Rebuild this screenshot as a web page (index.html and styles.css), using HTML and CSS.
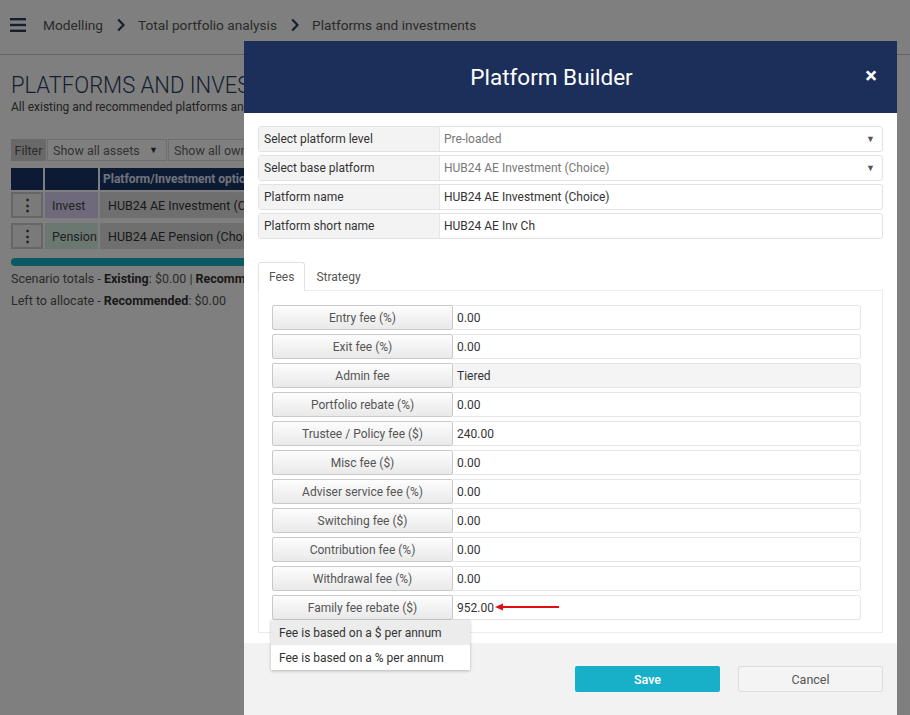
FILE: index.html
```html
<!DOCTYPE html>
<html>
<head>
<meta charset="utf-8">
<link rel="stylesheet" href="styles.css">
</head>
<body>
<div class="page">
  <div class="topbar">
    <svg class="burger" width="16" height="14" viewBox="0 0 16 14"><rect x="0" y="0" width="16" height="2.4" fill="#2c3e5c"/><rect x="0" y="5.8" width="16" height="2.4" fill="#2c3e5c"/><rect x="0" y="11.6" width="16" height="2.4" fill="#2c3e5c"/></svg>
    <span class="crumb">Modelling</span>
    <svg class="chev" width="8" height="14" viewBox="0 0 8 14"><path d="M1.2 1.5 L6.5 7 L1.2 12.5" fill="none" stroke="#2c3e5c" stroke-width="2.2"/></svg>
    <span class="crumb">Total portfolio analysis</span>
    <svg class="chev" width="8" height="14" viewBox="0 0 8 14"><path d="M1.2 1.5 L6.5 7 L1.2 12.5" fill="none" stroke="#2c3e5c" stroke-width="2.2"/></svg>
    <span class="crumb">Platforms and investments</span>
  </div>
  <div class="content">
    <h1 class="title">PLATFORMS AND INVESTMENTS</h1>
    <p class="subtitle">All existing and recommended platforms and investments</p>
    <div class="filters">
      <span class="filter-label">Filter</span>
      <span class="filter-select">Show all assets <span class="caret">▼</span></span>
      <span class="filter-select wide">Show all owners <span class="caret">▼</span></span>
    </div>
    <div class="grid">
      <div class="gh"></div><div class="gh"></div><div class="gh gh-text">Platform/Investment option</div>
      <div class="gc btn-cell"><span class="dots">⋮</span></div><div class="gc invest">Invest</div><div class="gc name">HUB24 AE Investment (Choice)</div>
      <div class="gc btn-cell"><span class="dots">⋮</span></div><div class="gc pension">Pension</div><div class="gc name">HUB24 AE Pension (Choice)</div>
    </div>
    <div class="progress"></div>
    <p class="totals">Scenario totals - <b>Existing</b>: $0.00 | <b>Recommended</b>: $0.00</p>
    <p class="totals">Left to allocate - <b>Recommended</b>: $0.00</p>
  </div>
</div>
<div class="overlay"></div>
<div class="modal">
  <div class="modal-head">
    <span class="modal-title">Platform Builder</span>
    <span class="close">×</span>
  </div>
  <div class="modal-body">
    <div class="frow"><span class="flabel">Select platform level</span><span class="fvalue sel">Pre-loaded<span class="caret2">▼</span></span></div>
    <div class="frow"><span class="flabel">Select base platform</span><span class="fvalue sel">HUB24 AE Investment (Choice)<span class="caret2">▼</span></span></div>
    <div class="frow"><span class="flabel">Platform name</span><span class="fvalue">HUB24 AE Investment (Choice)</span></div>
    <div class="frow"><span class="flabel">Platform short name</span><span class="fvalue">HUB24 AE Inv Ch</span></div>
    <div class="tabs">
      <span class="tab active">Fees</span>
      <span class="tab">Strategy</span>
    </div>
    <div class="panel">
      <div class="fee"><span class="fee-label">Entry fee (%)</span><span class="fee-value">0.00</span></div>
      <div class="fee"><span class="fee-label">Exit fee (%)</span><span class="fee-value">0.00</span></div>
      <div class="fee"><span class="fee-label">Admin fee</span><span class="fee-value ro">Tiered</span></div>
      <div class="fee"><span class="fee-label">Portfolio rebate (%)</span><span class="fee-value">0.00</span></div>
      <div class="fee"><span class="fee-label">Trustee / Policy fee ($)</span><span class="fee-value">240.00</span></div>
      <div class="fee"><span class="fee-label">Misc fee ($)</span><span class="fee-value">0.00</span></div>
      <div class="fee"><span class="fee-label">Adviser service fee (%)</span><span class="fee-value">0.00</span></div>
      <div class="fee"><span class="fee-label">Switching fee ($)</span><span class="fee-value">0.00</span></div>
      <div class="fee"><span class="fee-label">Contribution fee (%)</span><span class="fee-value">0.00</span></div>
      <div class="fee"><span class="fee-label">Withdrawal fee (%)</span><span class="fee-value">0.00</span></div>
      <div class="fee last"><span class="fee-label">Family fee rebate ($)</span><span class="fee-value">952.00</span>
        <svg class="arrow" width="66" height="8" viewBox="0 0 66 8"><path d="M6 4 H64" stroke="#e01010" stroke-width="2"/><path d="M0 4 L8 0.5 L8 7.5 Z" fill="#e01010"/></svg>
        <div class="dropdown">
          <div class="dd-item hl">Fee is based on a $ per annum</div>
          <div class="dd-item">Fee is based on a % per annum</div>
        </div>
      </div>
    </div>
  </div>
  <div class="modal-foot">
    <span class="btn save">Save</span>
    <span class="btn cancel">Cancel</span>
  </div>
</div>
</body>
</html>
```
FILE: styles.css
```css
html, body { margin: 0; padding: 0; }
body {
  width: 910px; height: 715px; overflow: hidden; position: relative;
  font-family: Roboto, "Liberation Sans", sans-serif; background: #fff; color: #333;
}
.topbar {
  height: 55px; border-bottom: 1px solid #c8c8c8; box-sizing: border-box;
  display: flex; align-items: center; padding-left: 10px; padding-bottom: 4px;
}
.burger { margin-right: 17px; }
.crumb { font-size: 13.7px; color: #555; }
.chev { margin: 0 13px 0 14px; }
.content { padding: 15px 11px 0 11px; }
.title { margin: 0; font-weight: 300; font-size: 22px; color: #2c3e5c; line-height: 30px; white-space: nowrap; transform: scaleY(1.1); transform-origin: left center; }
.subtitle { margin: 0; font-size: 12px; color: #444; line-height: 14px; }
.filters { display: flex; margin-top: 25px; height: 22px; }
.filter-label { background: #d2d2d2; color: #555; font-size: 12.5px; width: 35px; display: flex; align-items: center; justify-content: center; }
.filter-select { border: 1px solid #ddd; margin-left: 1px; font-size: 12.5px; color: #666; display: flex; align-items: center; padding-left: 5px; box-sizing: border-box; position: relative; width: 120px; }
.filter-select.wide { width: 200px; }
.caret { position: absolute; right: 8px; font-size: 9px; color: #333; }
.grid { display: grid; grid-template-columns: 32px 53px 300px; column-gap: 2px; row-gap: 2px; margin-top: 7px; grid-template-rows: 22px 26px 29px; }
.grid > :nth-child(n+7) { align-self: end; height: 26px; }
.gh { background: #1a3566; }
.gh-text { color: #dfe6f5; font-size: 12px; font-weight: 700; display: flex; align-items: center; padding-left: 3px; }
.gc { display: flex; align-items: center; font-size: 12.5px; color: #333; }
.btn-cell { border: 2px solid #ccc; background: #f5f5f5; justify-content: center; box-sizing: border-box; }
.dots { font-weight: 700; font-size: 15px; }
.invest { background: #dcd4f6; padding-left: 7px; color: #444; }
.pension { background: #d4f0e2; padding-left: 7px; color: #444; }
.name { background: #dedede; padding-left: 8px; }
.progress { height: 8px; border-radius: 4px; background: #18b0c7; margin-top: 9px; width: 300px; }
.totals { margin: 6px 0 0 0; font-size: 12.5px; color: #555; line-height: 14px; }
.totals + .totals { margin-top: 8px; }
.totals b { color: #333; }

.overlay { position: absolute; inset: 0; background: rgba(0,0,0,0.5); }

.modal {
  position: absolute; left: 244px; top: 41px; width: 653px; height: 700px;
  background: #fff; display: flex; flex-direction: column;
}
.modal-head { height: 72px; background: #1b2f5a; display: flex; align-items: center; position: relative; }
.modal-title { flex: 1; text-align: center; color: #fff; font-size: 22.5px; padding-right: 38px; }
.close { position: absolute; right: 20px; top: 22px; color: #fff; font-size: 22px; font-weight: 700; }
.modal-body { padding: 13px 14px 10px 14px; }
.frow { display: flex; height: 26px; border: 1px solid #e2e2e2; border-radius: 3px; margin-bottom: 3px; box-sizing: border-box; font-size: 12px; }
.flabel { width: 181px; background: #f3f3f3; color: #333; display: flex; align-items: center; padding-left: 5px; box-sizing: border-box; border-right: 1px solid #e6e6e6; }
.fvalue { flex: 1; display: flex; align-items: center; padding-left: 4px; color: #333; position: relative; }
.fvalue.sel { color: #777; }
.caret2 { position: absolute; right: 7px; font-size: 9px; color: #555; }
.tabs { display: flex; margin-top: 23px; height: 29px; align-items: stretch; margin-bottom: -1px; position: relative; z-index: 1; }
.tab { font-size: 12px; color: #555; display: flex; align-items: center; padding: 0 11px; }
.tab.active { border: 1px solid #e2e2e2; border-bottom: none; border-radius: 3px 3px 0 0; background: #fff; padding: 0 10px; }
.panel { border: 1px solid #ececec; padding: 14px 21px 12px 13px; }
.fee { display: flex; height: 25px; margin-bottom: 4px; position: relative; }
.fee.last { margin-bottom: 0; }
.fee-label {
  width: 181px; box-sizing: border-box; border: 1px solid #c9c9c9; border-radius: 2px;
  background: linear-gradient(#fdfdfd, #e9e9e9); color: #555; font-size: 12px;
  display: flex; align-items: center; justify-content: center;
}
.fee-value { flex: 1; border: 1px solid #e6e6e6; border-left: none; border-radius: 0 3px 3px 0; font-size: 12px; color: #333; display: flex; align-items: center; padding-left: 4px; }
.fee-value.ro { background: #f4f4f4; }
.arrow { position: absolute; left: 223px; top: 8px; }
.dropdown { position: absolute; left: -1px; top: 25px; width: 199px; background: #fff; box-shadow: 0 1px 3px rgba(0,0,0,0.25); z-index: 2; }
.dd-item { height: 25px; display: flex; align-items: center; padding-left: 8px; font-size: 12px; color: #333; }
.dd-item.hl { background: #ececec; }
.modal-foot { flex: 1; background: #f2f2f2; display: flex; justify-content: flex-end; align-items: flex-start; padding: 23px 14px 0 0; gap: 18px; }
.btn { width: 145px; height: 26px; border-radius: 2px; display: flex; align-items: center; justify-content: center; font-size: 12.5px; box-sizing: border-box; }
.save { background: #18b0c8; color: #fff; font-weight: 500; }
.cancel { border: 1px solid #dcdcdc; color: #555; background: #f4f4f4; }
```
